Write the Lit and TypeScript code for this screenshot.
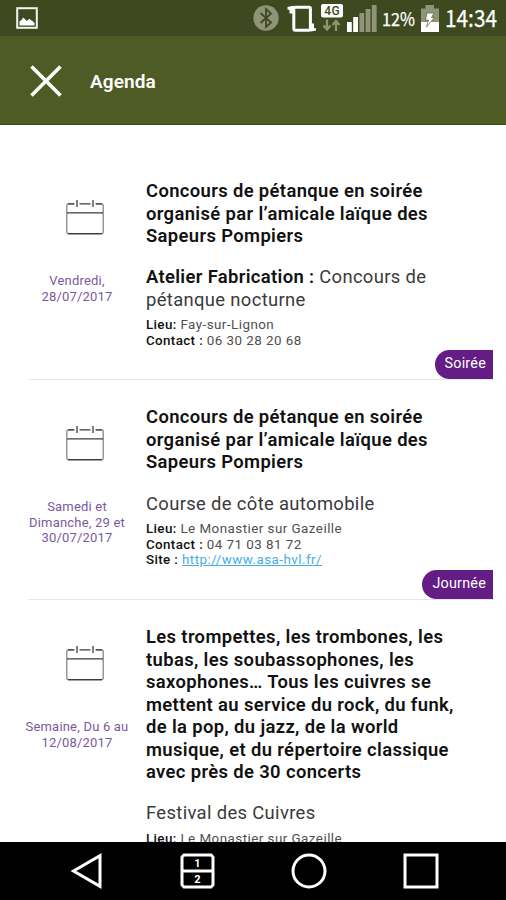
import { LitElement, html, css, svg, nothing } from "lit";
import { customElement, property } from "lit/decorators.js";

interface Entry {
  date: string[];
  title: string[];
  lead?: string;
  subtitle: string[];
  place: string;
  contact?: string;
  site?: string;
  badge?: string;
}

const entries: Entry[] = [
  {
    date: ["Vendredi,", "28/07/2017"],
    title: ["Concours de pétanque en soirée", "organisé par l’amicale laïque des", "Sapeurs Pompiers"],
    lead: "Atelier Fabrication :",
    subtitle: ["Concours de", "pétanque nocturne"],
    place: "Fay-sur-Lignon",
    contact: "06 30 28 20 68",
    badge: "Soirée",
  },
  {
    date: ["Samedi et", "Dimanche, 29 et", "30/07/2017"],
    title: ["Concours de pétanque en soirée", "organisé par l’amicale laïque des", "Sapeurs Pompiers"],
    subtitle: ["Course de côte automobile"],
    place: "Le Monastier sur Gazeille",
    contact: "04 71 03 81 72",
    site: "http://www.asa-hvl.fr/",
    badge: "Journée",
  },
  {
    date: ["Semaine, Du 6 au", "12/08/2017"],
    title: [
      "Les trompettes, les trombones, les",
      "tubas, les soubassophones, les",
      "saxophones… Tous les cuivres se",
      "mettent au service du rock, du funk,",
      "de la pop, du jazz, de la world",
      "musique, et du répertoire classique",
      "avec près de 30 concerts",
    ],
    subtitle: ["Festival des Cuivres"],
    place: "Le Monastier sur Gazeille",
  },
];

const lines = (rows: string[]) => rows.map((r, i) => html`${i ? html`<br />` : nothing}${r}`);

@customElement("status-bar")
class StatusBar extends LitElement {
  static styles = css`
    :host { display: flex; height: 36px; background: #3f491f; align-items: center; padding: 0 8px 0 16px; box-sizing: border-box; color: #fff; }
    svg { display: block; flex: none; overflow: visible; }
    .spacer { flex: 1; }
    .bluetooth { margin-right: 8px; }
    .vibrate { margin-right: 5px; }
    .network { margin-right: 4px; }
    .signal { margin-right: 6px; }
    .tag { font: 500 12px Roboto, sans-serif; }
    .num { fill: #fff; font-family: "Noto Sans CJK SC", "Noto Sans", sans-serif; font-weight: 400; stroke: #fff; stroke-width: 0.25px; }
    .percent { font-size: 18px; }
    .clock { font-size: 23.5px; }
  `;
  render() {
    return html`
      <svg width="22" height="22" viewBox="0 0 22 22">
        <rect x="1.2" y="1.2" width="19.6" height="19.6" fill="none" stroke="#f3f4ee" stroke-width="2" />
        <path d="M3.5 18.5V14.5L6 12.5L7 10.5L9 12L10.5 14L12 13L13.5 11.8L15.5 13.5L16.5 14L18.5 16V18.5Z" fill="#fff" />
      </svg>
      <span class="spacer"></span>
      <svg class="bluetooth" width="26" height="26" viewBox="0 0 26 26">
        <circle cx="13" cy="13" r="12.7" fill="#8f9479" />
        <path d="M7.5 8L18 17.5L13 22V4L18 8.5L7.5 18" fill="none" stroke="#3f491f" stroke-width="1.8" />
      </svg>
      <svg class="vibrate" width="29" height="27" viewBox="0 0 29 27">
        <rect x="6.8" y="2.2" width="16.6" height="23" rx="1.5" fill="none" stroke="#fff" stroke-width="3" />
        <path d="M.5 2L6 .8V8.5H2.5V5L.5 4.5ZM29 25.5L24 26.5V18.5H27V23L29 23.5Z" fill="#fff" />
      </svg>
      <svg class="network" width="22" height="28" viewBox="0 0 22 28">
        <rect width="22" height="13.5" rx="2" fill="#fff" />
        <text class="tag" x="3.2" y="11" fill="#3f491f" textLength="15.5">4G</text>
        <path d="M6 15.5V25M2.5 21.5L6 25.5L9.5 21.5M15 27V17.5M11.5 21L15 17L18.5 21" fill="none" stroke="#8f9479" stroke-width="2.3" />
      </svg>
      <svg class="signal" width="30" height="27" viewBox="0 0 30 27">
        ${[
          [0, 10, "#fff"],
          [6.2, 15, "#fff"],
          [12.4, 19, "#8f9479"],
          [18.6, 23, "#8f9479"],
          [24.8, 27, "#8f9479"],
        ].map(([x, h, f]) => svg`<rect x=${x} y=${27 - Number(h)} width="4.8" height=${h} fill=${f} />`)}
      </svg>
      <svg width="38" height="36" viewBox="0 0 38 36">
        <text class="num percent" x="-1" y="25.5" textLength="33" lengthAdjust="spacingAndGlyphs">12%</text>
      </svg>
      <svg width="18" height="27" viewBox="0 0 18 27">
        <path d="M4.5 0H13V3.5H18V27H0V3.5H4.5Z" fill="#8f9479" />
        <path d="M0 17H18V27H0Z" fill="#fff" />
        <path d="M6 8H13L10.5 12.5H13.5L5.5 22L7.5 15H4.5Z" fill="#fff" stroke="#59612f" stroke-width=".7" />
      </svg>
      <svg width="59" height="36" viewBox="0 0 59 36">
        <text class="num clock" x="6" y="27" textLength="52" lengthAdjust="spacingAndGlyphs">14:34</text>
      </svg>
    `;
  }
}

@customElement("agenda-item")
class AgendaItem extends LitElement {
  @property({ attribute: false }) entry!: Entry;
  static styles = css`
    :host { display: grid; grid-template-columns: 118px 1fr; position: relative; margin: 0 13px 0 28px; padding: 26.5px 0 30.6px; border-bottom: 1px solid #e6e6e8; color: #111; white-space: nowrap; }
    .when { display: flex; flex-direction: column; align-items: center; width: 98px; padding-top: 20px; }
    .cal { display: block; margin-left: 15px; }
    .date { margin-top: 38px; text-align: center; font-size: 13px; line-height: 15.5px; letter-spacing: 0.2px; color: #7c58a0; }
    .title { font-size: 18.4px; line-height: 22.5px; font-weight: 600; letter-spacing: 0.37px; }
    .subtitle { margin-top: 18.7px; font-size: 18.4px; line-height: 22.5px; letter-spacing: 0.35px; font-weight: 400; color: #3a3a3a; }
    .details { margin-top: 6px; font-size: 13.4px; line-height: 15.6px; letter-spacing: 0.46px; color: #505050; }
    b { font-weight: 600; color: #111; }
    .details b { letter-spacing: 0.36px; font-weight: 500; }
    .link { color: #45aee8; text-decoration: underline; }
    .badge { position: absolute; right: 0; bottom: 0; height: 29px; line-height: 26px; box-sizing: border-box; padding: 0 7px 0 10px; border-radius: 14.5px 0 0 14.5px; background: #641d84; color: #fff; font-size: 14.3px; font-weight: 400; letter-spacing: 0.25px; }
  `;
  render() {
    const e = this.entry;
    return html`
      <div class="when">
        <svg class="cal" width="38" height="35" viewBox="0 0 38 35" fill="none" stroke="#3c3c3c">
          <path d="M8 3.8H2.5Q.8 3.8 .8 5.5V32Q.8 33.8 2.5 33.8H35.5Q37.2 33.8 37.2 32V5.5Q37.2 3.8 35.5 3.8H30" stroke-width="1.3" stroke="#888" />
          <path d="M2 3.8H8.5M13.5 3.8H24.5M29.5 3.8H36M1 12.8H37M2 33.6H36M11 0V7M27 0V7" stroke-width="1.3" />
        </svg>
        <div class="date">${lines(e.date)}</div>
      </div>
      <div>
        <div class="title">${lines(e.title)}</div>
        <div class="subtitle">${e.lead ? html`<b>${e.lead}</b> ` : nothing}${lines(e.subtitle)}</div>
        <div class="details">
          <b>Lieu:</b> ${e.place}
          ${e.contact ? html`<br /><b>Contact :</b> ${e.contact}` : nothing}
          ${e.site ? html`<br /><b>Site :</b> <span class="link">${e.site}</span>` : nothing}
        </div>
      </div>
      ${e.badge ? html`<span class="badge">${e.badge}</span>` : nothing}
    `;
  }
}

@customElement("nav-bar")
class NavBar extends LitElement {
  static styles = css`
    :host { display: flex; height: 58px; background: #000; align-items: center; justify-content: space-between; padding: 0 67px 0 70px; box-sizing: border-box; }
    svg { display: block; }
    .digit { font: 700 11px Roboto, sans-serif; }
  `;
  render() {
    return html`
      <svg width="34" height="36" viewBox="0 0 34 36"><path d="M3.5 18L30 2.7V33.3Z" fill="none" stroke="#fff" stroke-width="3" /></svg>
      <svg width="36" height="36" viewBox="0 0 36 36">
        <path d="M4 2H31L33 4V32L31 34H4L2 32V4ZM2 18H33" fill="none" stroke="#fff" stroke-width="3" />
        <text class="digit" x="17.5" y="14" text-anchor="middle" fill="#fff">1</text>
        <text class="digit" x="17.5" y="30" text-anchor="middle" fill="#fff">2</text>
      </svg>
      <svg width="36" height="36" viewBox="0 0 36 36"><circle cx="18" cy="18" r="16" fill="none" stroke="#fff" stroke-width="3" /></svg>
      <svg width="36" height="36" viewBox="0 0 36 36"><rect x="2" y="2" width="32" height="32" fill="none" stroke="#fff" stroke-width="3" /></svg>
    `;
  }
}

@customElement("app-root")
class AppRoot extends LitElement {
  static styles = css`
    :host { display: flex; flex-direction: column; height: 900px; overflow: hidden; background: #fff; font-family: Roboto, sans-serif; }
    .header { display: flex; align-items: center; height: 89px; box-sizing: border-box; padding: 2px 0 0 30px; background: #4e5b25; border-bottom: 1px solid #3c4b14; color: #fff; flex: none; }
    .header svg { display: block; }
    .heading { margin: 0 0 0 28px; font-size: 19px; font-weight: 600; letter-spacing: 0.1px; }
    .list { flex: 1; min-height: 0; overflow: hidden; padding-top: 28.5px; }
    status-bar, nav-bar { flex: none; }
  `;
  render() {
    return html`
      <status-bar></status-bar>
      <div class="header">
        <svg width="32" height="32" viewBox="0 0 32 32"><path d="M1.5 1.5L30.5 30.5M30.5 1.5L1.5 30.5" stroke="#fff" stroke-width="3.6" /></svg>
        <h1 class="heading">Agenda</h1>
      </div>
      <div class="list">${entries.map((e) => html`<agenda-item .entry=${e}></agenda-item>`)}</div>
      <nav-bar></nav-bar>
    `;
  }
}
